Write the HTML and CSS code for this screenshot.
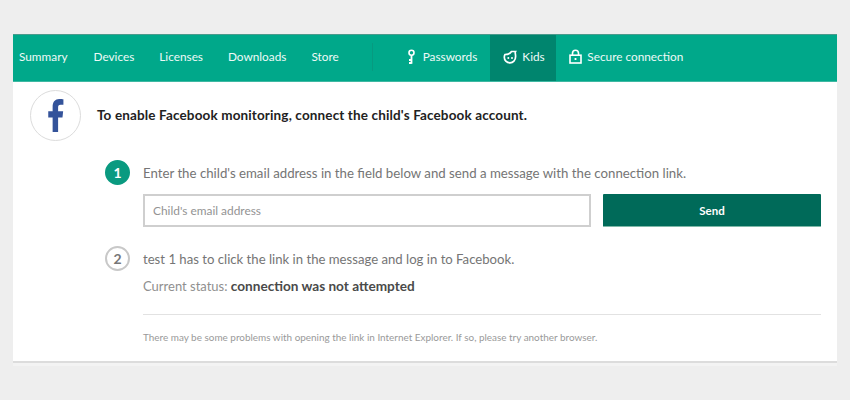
FILE: index.html
```html
<!DOCTYPE html>
<html lang="en">
<head>
<meta charset="utf-8">
<title>Kids</title>
<link rel="stylesheet" href="styles.css">
</head>
<body>
<main class="card">
  <nav class="nav">
    <a class="nav-link link-summary">Summary</a>
    <a class="nav-link link-devices">Devices</a>
    <a class="nav-link link-licenses">Licenses</a>
    <a class="nav-link link-downloads">Downloads</a>
    <a class="nav-link link-store">Store</a>
    <span class="nav-sep"></span>
    <a class="nav-link link-passwords">
      <svg class="nav-icon" width="8" height="16" viewBox="0 0 8 16"><circle cx="4.500" cy="3.800" r="2.500" fill="none" stroke="#fff" stroke-width="1.600"/><path d="M4.500 6V14.800M4.500 11H2M4.500 14H2" fill="none" stroke="#fff" stroke-width="1.800"/></svg>
      Passwords</a>
    <a class="nav-link link-kids">
      <svg class="nav-icon" width="14" height="14" viewBox="0 0 14 14"><path d="M2 4.500C4 4.500 7 4 8.500 1.500L12.500 1.500C11.800 2.500 12.600 4 12.600 6.500C12.600 10.500 10 12.800 7 12.800C3.500 12.800 1.300 10.300 1.300 7.300C1.300 6.200 1.500 5.200 2 4.500Z" fill="none" stroke="#fff" stroke-width="1.700"/><circle cx="5.300" cy="8" r="1" fill="#fff"/><circle cx="9" cy="8" r="1" fill="#fff"/></svg>
      Kids</a>
    <a class="nav-link link-secure">
      <svg class="nav-icon" width="13" height="15" viewBox="0 0 13 15"><path d="M3.500 6.500V4.200C3.500 2.400 4.700 1.200 6.500 1.200C8.300 1.200 9.500 2.400 9.500 4.200V6.500" fill="none" stroke="#fff" stroke-width="1.600"/><rect x="1" y="6.200" width="11" height="7.800" fill="none" stroke="#fff" stroke-width="1.600"/><rect x="5.600" y="9" width="1.800" height="2" fill="#fff"/></svg>
      Secure connection</a>
  </nav>
  <section class="intro">
    <div class="fb-badge">
      <svg width="16" height="33" viewBox="0 0 19 34" preserveAspectRatio="none"><path d="M5.500 34V19H0.300V12.600H5.500V8C5.500 2.800 8.600 0 13.200 0C15.400 0 17.300 0.200 18.300 0.300V6H15C12.500 6 12 7.200 12 9V12.600H18L17.200 19H12V34Z" fill="#34539a"/></svg>
    </div>
    <h1 class="intro-text">To enable Facebook monitoring, connect the child's Facebook account.</h1>
  </section>
  <section class="steps">
    <div class="step step-one">
      <span class="num num-active">1</span>
      <p class="step-text">Enter the child's email address in the field below and send a message with the connection link.</p>
    </div>
    <div class="form-row">
      <input class="email" type="text" placeholder="Child's email address">
      <button class="send" type="button">Send</button>
    </div>
    <div class="step step-two">
      <span class="num">2</span>
      <p class="step-text step-text-short">test 1 has to click the link in the message and log in to Facebook.</p>
    </div>
    <p class="status">Current status: <strong>connection was not attempted</strong></p>
    <p class="note">There may be some problems with opening the link in Internet Explorer. If so, please try another browser.</p>
  </section>
</main>
</body>
</html>
```
FILE: styles.css
```css
* { box-sizing: border-box; }
html, body { height: 100%; }
body {
  margin: 0;
  padding: 34px 13px 0;
  background: #eeeeee;
  font-family: "Lato", "Liberation Sans", sans-serif;
  color: #666;
  overflow: hidden;
}
.card {
  width: 824px;
  height: 329px;
  background: #fff;
  border-bottom: 2px solid #dcdcdc;
  box-shadow: 0 3px 0 #f3f3f3;
}
.nav {
  display: flex;
  height: 48px;
  background: #00a88a;
  border-top: 1px solid #4a9a8c;
  border-bottom: 1px solid #3fb8a2;
  color: #fff;
  font-size: 11.8px;
}
.nav-link {
  display: flex;
  align-items: center;
  padding-bottom: 3px;
  color: #eefaf7;
  white-space: nowrap;
}
.nav-icon { flex: none; }
.link-summary { margin-left: 6px; }
.link-devices { margin-left: 26px; }
.link-licenses { margin-left: 25px; }
.link-downloads { margin-left: 25px; }
.link-store { margin-left: 25px; }
.nav-sep {
  width: 1px;
  height: 28px;
  margin: 8px 0 0 33px;
  background: #079a80;
}
.link-passwords { margin-left: 34px; gap: 8px; }
.link-kids {
  margin-left: 13px;
  width: 66px;
  padding-left: 13px;
  gap: 5px;
  background: #00856e;
}
.link-secure { margin-left: 13px; gap: 5px; }
.intro {
  display: flex;
  align-items: center;
  height: 67px;
  padding: 0 0 0 17px;
}
.fb-badge {
  display: flex;
  align-items: center;
  justify-content: center;
  flex: none;
  width: 51px;
  height: 51px;
  border: 1px solid #dcdcdc;
  border-radius: 50%;
}
.intro-text {
  margin: 0 0 2px 16px;
  color: #222;
  font-size: 13.5px;
  font-weight: 700;
  letter-spacing: 0.14px;
}
.steps { padding: 11px 16px 0 92px; }
.step { display: flex; align-items: center; gap: 13px; }
.num {
  display: flex;
  align-items: center;
  justify-content: center;
  flex: none;
  width: 25px;
  height: 25px;
  border: 2px solid #c8c8c8;
  border-radius: 50%;
  color: #777;
  font-size: 14px;
  font-weight: 700;
}
.num-active { background: #0a9a80; border-color: #0a9a80; color: #fff; }
.step-text { margin: 0; font-size: 13.24px; color: #757575; }
.step-text-short { font-size: 13.15px; }
.form-row {
  display: flex;
  gap: 12px;
  margin: 9px 0 0 38px;
}
.email {
  width: 448px;
  height: 33px;
  padding: 0 8px;
  border: 2px solid #cfcfcf;
  border-radius: 0;
  background: #fff;
  font: 11.9px "Lato", "Liberation Sans", sans-serif;
  outline: none;
}
.email::placeholder { color: #939393; opacity: 1; }
.send {
  width: 218px;
  height: 33px;
  border: 0;
  border-bottom: 1px solid #7fb8a8;
  border-radius: 1px;
  background: #006a59;
  color: #fff;
  font: 700 11.5px "Lato", "Liberation Sans", sans-serif;
}
.step-two { margin-top: 19px; }
.status {
  margin: 7px 0 0 38px;
  font-size: 13px;
  color: #8f8f8f;
}
.status strong { color: #4a4a4a; font-weight: 700; font-size: 13.6px; }
.note {
  margin: 20px 0 0 38px;
  padding-top: 16px;
  border-top: 1px solid #e2e2e2;
  font-size: 9.93px;
  color: #9a9a9a;
}
```
